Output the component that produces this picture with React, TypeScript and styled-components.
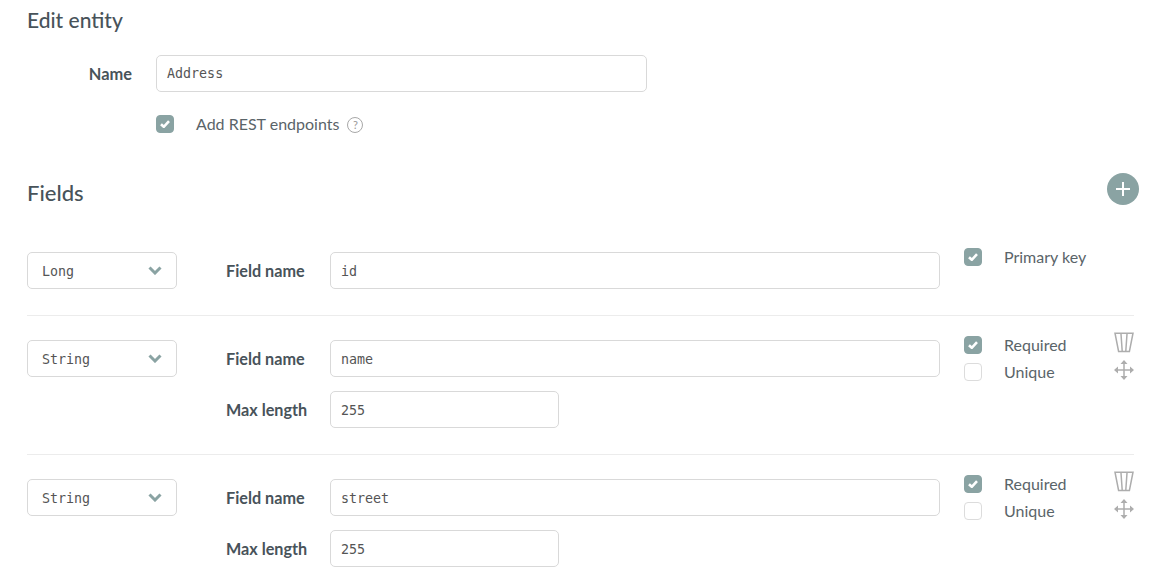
import React, { FC } from 'react';
import styled, { createGlobalStyle } from 'styled-components';

const GlobalStyle = createGlobalStyle`
  html, body {
    margin: 0;
    background: #fff;
    overflow: hidden;
  }
  body {
    font-family: Lato, "Open Sans", sans-serif;
    color: #48535a;
  }
`;

type Field = {
  type: string;
  name: string;
  maxLength?: string;
  primary?: boolean;
};

const fields: Field[] = [
  { type: 'Long', name: 'id', primary: true },
  { type: 'String', name: 'name', maxLength: '255' },
  { type: 'String', name: 'street', maxLength: '255' },
];

const Check: FC<{ checked?: boolean }> = ({ checked }) => (
  <CheckBox $checked={checked}>
    {checked && (
      <svg width="10" height="8" viewBox="0 0 10 8">
        <path d="M1 4.2 3.8 6.8 9 1.2" fill="none" stroke="#fff" strokeWidth="2.6" />
      </svg>
    )}
  </CheckBox>
);

const Chevron = () => (
  <svg width="14" height="9" viewBox="0 0 14 9">
    <path d="M1.5 1.5 7 7 12.5 1.5" fill="none" stroke="#8aa3a3" strokeWidth="3" />
  </svg>
);

const Trash = () => (
  <TrashIcon width="20" height="21" viewBox="0 0 20 21">
    <path
      d="M1 1.2h18L15.4 19.5H4.6zM7 2l1.2 17M13 2l-1.2 17"
      fill="none"
      stroke="#adadad"
      strokeWidth="1.5"
    />
  </TrashIcon>
);

const Move = () => (
  <MoveIcon width="22" height="22" viewBox="0 0 22 22">
    <path d="M11 2v18M2 11h18" fill="none" stroke="#adadad" strokeWidth="1.5" />
    <path
      d="M7.5 5 11 1l3.5 4zM7.5 17 11 21l3.5-4zM5 7.5 1 11l4 3.5zM17 7.5 21 11l-4 3.5z"
      fill="#adadad"
    />
  </MoveIcon>
);

const App = () => {
  return (
    <Root>
      <GlobalStyle />
      <Title>Edit entity</Title>
      <NameRow>
        <NameLabel>Name</NameLabel>
        <Input $width={491}>Address</Input>
      </NameRow>
      <RestRow>
        <Check checked />
        <RestLabel>Add REST endpoints</RestLabel>
        <Help>?</Help>
      </RestRow>
      <FieldsHeader>
        <FieldsTitle>Fields</FieldsTitle>
        <AddButton>
          <svg width="16" height="16" viewBox="0 0 16 16">
            <path d="M8 1v14M1 8h14" stroke="#fff" strokeWidth="2" />
          </svg>
        </AddButton>
      </FieldsHeader>
      <FieldList>
        {fields.map((field) => (
          <FieldRow key={field.name}>
            <Select>
              <SelectValue>{field.type}</SelectValue>
              <Chevron />
            </Select>
            <FieldInputs>
              <InputRow>
                <FieldLabel>Field name</FieldLabel>
                <Input $width={610}>
                  <SelectValue>{field.name}</SelectValue>
                </Input>
              </InputRow>
              {field.maxLength && (
                <InputRow>
                  <FieldLabel>Max length</FieldLabel>
                  <Input $width={229}>
                    <SelectValue>{field.maxLength}</SelectValue>
                  </Input>
                </InputRow>
              )}
            </FieldInputs>
            {field.primary ? (
              <Options>
                <Option>
                  <Check checked />
                  <OptionLabel>Primary key</OptionLabel>
                </Option>
              </Options>
            ) : (
              <Options>
                <Option>
                  <Check checked />
                  <OptionLabel>Required</OptionLabel>
                  <Trash />
                </Option>
                <Option>
                  <Check />
                  <OptionLabel>Unique</OptionLabel>
                  <Move />
                </Option>
              </Options>
            )}
          </FieldRow>
        ))}
      </FieldList>
    </Root>
  );
};

export default App;

const Root = styled.div`
  box-sizing: border-box;
  width: 1157px;
  height: 588px;
  padding: 7px 23px 0 27px;
  overflow: hidden;
`;
const Title = styled.h2`
  margin: 0;
  height: 26px;
  font-size: 21px;
  line-height: 26px;
  font-weight: 500;
  color: #48535a;
`;
const NameRow = styled.div`
  display: flex;
  align-items: center;
  margin-top: 22px;
`;
const NameLabel = styled.label`
  width: 105px;
  margin-right: 24px;
  padding-bottom: 1px;
  text-align: right;
  font-size: 16.4px;
  font-weight: 700;
`;
const Input = styled.div<{ $width: number }>`
  box-sizing: border-box;
  width: ${(p) => p.$width}px;
  height: 37px;
  padding: 0 10px;
  display: flex;
  align-items: center;
  border: 1px solid #d9d9d9;
  border-radius: 5px;
  font-family: "DejaVu Sans Mono", monospace;
  font-size: 13.33px;
  color: #555;
`;
const RestRow = styled.div`
  display: flex;
  align-items: center;
  height: 18px;
  margin: 23px 0 0 129px;
`;
const RestLabel = styled.span`
  margin-left: 22px;
  padding-bottom: 1px;
  font-size: 16px;
  color: #5a6469;
`;
const Help = styled.span`
  box-sizing: border-box;
  width: 16px;
  height: 16px;
  margin: 1px 0 0 8px;
  display: flex;
  align-items: center;
  justify-content: center;
  border: 1.3px solid #a8a8a8;
  border-radius: 50%;
  font-size: 11px;
  color: #999;
`;
const FieldsHeader = styled.div`
  display: flex;
  justify-content: space-between;
  align-items: flex-start;
  height: 32px;
  margin: 40px -5px 0 0;
`;
const FieldsTitle = styled.h2`
  margin: 7px 0 0;
  font-size: 22px;
  line-height: 26px;
  font-weight: 500;
  color: #48535a;
`;
const AddButton = styled.button`
  width: 32px;
  height: 32px;
  padding: 0;
  display: flex;
  align-items: center;
  justify-content: center;
  border: 0;
  border-radius: 50%;
  background: #8aa3a3;
`;
const FieldList = styled.div`
  margin-top: 23px;
`;
const FieldRow = styled.div`
  display: flex;
  align-items: flex-start;
  padding: 24px 0 26px;
  border-bottom: 1px solid #ececec;

  &:last-child {
    border-bottom: 0;
  }
`;
const Select = styled.div`
  box-sizing: border-box;
  width: 150px;
  height: 37px;
  padding: 0 14px;
  display: flex;
  align-items: center;
  justify-content: space-between;
  border: 1px solid #d9d9d9;
  border-radius: 5px;
  font-family: "DejaVu Sans Mono", monospace;
  font-size: 13.33px;
  color: #555;
`;
const SelectValue = styled.span`
  padding-top: 1px;
`;
const FieldInputs = styled.div`
  display: flex;
  flex-direction: column;
  gap: 14px;
  margin-left: 49px;
`;
const InputRow = styled.div`
  display: flex;
  align-items: center;
`;
const FieldLabel = styled.label`
  width: 104px;
  padding-bottom: 1px;
  font-size: 16.2px;
  font-weight: 700;
`;
const Options = styled.div`
  display: flex;
  flex-direction: column;
  gap: 9px;
  width: 170px;
  margin: -4px 0 0 24px;
`;
const Option = styled.div`
  display: flex;
  align-items: center;
  height: 18px;
`;
const OptionLabel = styled.span`
  flex: 1;
  margin-left: 22px;
  padding-bottom: 2px;
  font-size: 16px;
  color: #5a6469;
`;
const TrashIcon = styled.svg`
  margin-bottom: 5px;
`;
const MoveIcon = styled.svg`
  margin: 0 -1px 4px 0;
`;
const CheckBox = styled.span<{ $checked?: boolean }>`
  box-sizing: border-box;
  flex: none;
  width: 18px;
  height: 18px;
  display: flex;
  align-items: center;
  justify-content: center;
  border-radius: 4px;
  border: 1px solid ${(p) => (p.$checked ? '#8aa3a3' : '#dcdcdc')};
  background: ${(p) => (p.$checked ? '#8aa3a3' : '#fff')};
`;
